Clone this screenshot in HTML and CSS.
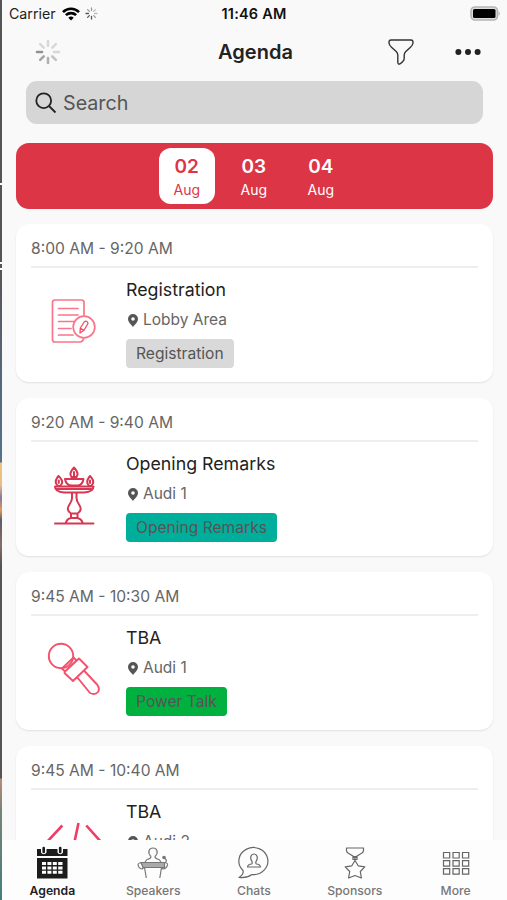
FILE: index.html
```html
<!DOCTYPE html>
<html lang="en">
<head>
    <meta charset="UTF-8">
    <meta name="viewport" content="width=device-width, initial-scale=1.0">
    <title>Agenda</title>
    <link rel="stylesheet" href="styles.css">
</head>
<body>
    <div class="backdrop"></div>
    <div class="app">
        <!-- Status bar -->
        <div class="status-bar">
            <div class="carrier">
                <span class="carrier-name">Carrier</span>
                <svg class="wifi" width="18" height="14" viewBox="0 0 18 14" fill="none" stroke="#000" stroke-width="2.6">
                    <path d="M1 5.1C5.500.6 12.500.6 17 5.100M3.900 8.200C6.700 5.400 11.300 5.400 14.100 8.200"/>
                    <path d="M9 13.500L6.300 10.700Q9 8.500 11.700 10.700Z" fill="#000" stroke="none"/>
                </svg>
                <svg class="status-spinner" width="13" height="13" viewBox="-13 -13 26 26" stroke-width="2.6" stroke-linecap="round">
                    <path stroke="#555" d="M-6 0H-11M-4.300 4.300L-7.800 7.800M0 6V11"/>
                    <path stroke="#999" d="M4.300 4.300L7.800 7.800M0-6V-11M-4.300-4.300L-7.800-7.800"/>
                    <path stroke="#bbb" d="M6 0H11M4.300-4.300L7.800-7.800"/>
                </svg>
            </div>
            <span class="clock">11:46 AM</span>
            <svg class="battery" width="31" height="15" viewBox="0 0 31 15">
                <rect x="1" y="1" width="26.500" height="13" rx="4" fill="#ddd" stroke="#b5b5b5" stroke-width="1.600"/>
                <rect x="3" y="3" width="22.500" height="9" rx="1.500" fill="#000"/>
                <path d="M28.700 5.200Q30.800 7.500 28.700 9.800Z" fill="#aaa"/>
            </svg>
        </div>

        <!-- Title bar -->
        <div class="nav-bar">
            <svg class="spinner" width="26" height="26" viewBox="-13 -13 26 26" stroke-width="2.600" stroke-linecap="round">
                <path stroke="#929292" d="M-6 0H-11"/>
                <path stroke="#a5a5a5" d="M-4.300 4.300L-7.800 7.800"/>
                <path stroke="#b0b0b0" d="M0 6V11"/>
                <path stroke="#c2c2c2" d="M4.300 4.300L7.800 7.800"/>
                <path stroke="#d8d8d8" d="M6 0H11M4.300-4.300L7.800-7.800M0-6V-11M-4.300-4.300L-7.800-7.800"/>
            </svg>
            <h1>Agenda</h1>
            <div class="actions">
                <svg width="26" height="26" viewBox="0 0 26 26" fill="none" stroke="#333" stroke-width="1.400" stroke-linejoin="round">
                    <path d="M3 1H23Q25.200 1 25 4Q24.800 6.200 22.500 8.200L17.800 12.600Q16.200 14.200 16.200 16V19.500Q16.200 21.200 14.700 22.600L12.300 24.700Q10 26 9.800 23.500V16Q9.800 14.200 8.200 12.600L3.500 8.200Q1.200 6.200 1 4Q.8 1 3 1Z"/>
                </svg>
                <svg width="26" height="8" viewBox="0 0 26 8" fill="#222">
                    <circle cx="3.400" cy="4" r="3"/><circle cx="13" cy="4" r="3"/><circle cx="22.600" cy="4" r="3"/>
                </svg>
            </div>
        </div>

        <div class="search">
            <svg width="22" height="22" viewBox="0 0 22 22" fill="none" stroke="#222" stroke-width="1.800">
                <circle cx="8.700" cy="8.700" r="7.400"/>
                <path d="M14 14L20.500 20.500"/>
            </svg>
            <span>Search</span>
        </div>

        <!-- Day picker -->
        <div class="days">
            <div class="day active"><strong>02</strong><span>Aug</span></div>
            <div class="day"><strong>03</strong><span>Aug</span></div>
            <div class="day"><strong>04</strong><span>Aug</span></div>
        </div>

        <!-- Sessions -->
        <div class="sessions">
            <div class="card">
                <div class="time">8:00 AM - 9:20 AM</div>
                <div class="session">
                    <svg class="picture" width="60" height="60" viewBox="0 0 60 60" fill="none" stroke="#f9758b" stroke-width="1.700" stroke-linecap="round">
                        <path d="M41 24V11.500Q41 9 38.500 9H12Q9.500 9 9.500 11.500V48.500Q9.500 51 12 51H37Q39.500 51 40.500 48"/>
                        <path d="M15.500 17.500H35M15.500 24H35M15.500 30.500H31M15.500 37.500H28M15.500 44H30"/>
                        <circle cx="41" cy="36" r="10.800"/>
                        <path stroke="#f44c68" stroke-width="1.300" stroke-linejoin="round" d="M37 42L37.300 37L41.500 30.500Q44.500 29.500 45 32.500L40.800 39.500ZM37.300 37L40.800 39.500"/>
                    </svg>
                    <div class="info">
                        <div class="title">Registration</div>
                        <div class="place"><svg width="10" height="13" viewBox="0 0 10 13"><path fill="#555" fill-rule="evenodd" d="M5 0A5 5 0 0 1 10 5C10 8.300 6.300 11 5 13C3.700 11 0 8.300 0 5A5 5 0 0 1 5 0ZM5 3.200A1.800 1.800 0 1 0 5 6.800A1.800 1.800 0 0 0 5 3.200Z"/></svg>Lobby Area</div>
                        <span class="tag">Registration</span>
                    </div>
                </div>
            </div>

            <div class="card">
                <div class="time">9:20 AM - 9:40 AM</div>
                <div class="session">
                    <svg class="picture" width="60" height="60" viewBox="0 0 60 60" fill="none" stroke="#d73752" stroke-width="2" stroke-linecap="round" stroke-linejoin="round">
                        <path d="M12 58.500H50.500M23 57.500Q24 53.800 28 53H34Q38.500 53.800 39.500 57.500"/>
                        <path d="M29 28V33Q29 36 26.500 39.500Q22.500 45 28 48.500V52.500M33.500 28V33Q33.500 36 36 39.500Q40 45 34.500 48.500V52.500M28 48.500H34.500"/>
                        <path d="M12 21.500H50.500Q50.500 26.800 41 27.500H21Q12 26.800 12 21.500ZM14 24H48"/>
                        <path d="M22 14H40.500Q39.500 20 35 20.500H28Q23 20 22 14Z"/>
                        <path d="M31 2.500Q36.500 8.500 33.500 12H28.500Q25.500 8.500 31 2.500ZM31 7V11M15.500 11Q12 15 13 18.500L15 21H17L19 18.500Q20 15 15.500 11ZM47 11Q43.500 15 44.500 18.500L46 21H48L50 18.500Q51 15 47 11ZM15.800 15.500V18M47 15.500V18"/>
                    </svg>
                    <div class="info">
                        <div class="title">Opening Remarks</div>
                        <div class="place"><svg width="10" height="13" viewBox="0 0 10 13"><path fill="#555" fill-rule="evenodd" d="M5 0A5 5 0 0 1 10 5C10 8.300 6.300 11 5 13C3.700 11 0 8.300 0 5A5 5 0 0 1 5 0ZM5 3.200A1.800 1.800 0 1 0 5 6.800A1.800 1.800 0 0 0 5 3.200Z"/></svg>Audi 1</div>
                        <span class="tag teal">Opening Remarks</span>
                    </div>
                </div>
            </div>

            <div class="card">
                <div class="time">9:45 AM - 10:30 AM</div>
                <div class="session">
                    <svg class="picture" width="60" height="60" viewBox="0 0 60 60" fill="none" stroke="#f4516d" stroke-width="1.900" stroke-linejoin="round">
                        <circle cx="18" cy="17" r="12.200"/>
                        <path d="M19 29.500L30.500 18.500L33.500 21.500L22 32.500ZM22 32.500L36 19.500L44.500 28L30 42L21.500 34ZM34 38L47 54Q52 56.500 55 53Q57 50 54.500 46L41 31.500"/>
                    </svg>
                    <div class="info">
                        <div class="title">TBA</div>
                        <div class="place"><svg width="10" height="13" viewBox="0 0 10 13"><path fill="#555" fill-rule="evenodd" d="M5 0A5 5 0 0 1 10 5C10 8.300 6.300 11 5 13C3.700 11 0 8.300 0 5A5 5 0 0 1 5 0ZM5 3.200A1.800 1.800 0 1 0 5 6.800A1.800 1.800 0 0 0 5 3.200Z"/></svg>Audi 1</div>
                        <span class="tag green">Power Talk</span>
                    </div>
                </div>
            </div>

            <div class="card">
                <div class="time">9:45 AM - 10:40 AM</div>
                <div class="session">
                    <svg class="picture" width="60" height="60" viewBox="0 0 60 60" fill="none" stroke="#ee3e65" stroke-width="2.600">
                        <path d="M19.300 12.500L3 30L19.300 47.500M35.500 10L27 50M43.300 12.500L59 30L43.300 47.500"/>
                    </svg>
                    <div class="info">
                        <div class="title">TBA</div>
                        <div class="place"><svg width="10" height="13" viewBox="0 0 10 13"><path fill="#555" fill-rule="evenodd" d="M5 0A5 5 0 0 1 10 5C10 8.300 6.300 11 5 13C3.700 11 0 8.300 0 5A5 5 0 0 1 5 0ZM5 3.200A1.800 1.800 0 1 0 5 6.800A1.800 1.800 0 0 0 5 3.200Z"/></svg>Audi 2</div>
                    </div>
                </div>
            </div>
        </div>

        <!-- Bottom tabs -->
        <div class="tabs">
            <div class="tab active">
                <svg width="34" height="34" viewBox="0 0 34 34">
                    <path fill="#1c1c1c" d="M2 3H6V6.500A3 3 0 0 0 11.500 6.500V3H22.500V6.500A3 3 0 0 0 28 6.500V3H32.500V10H2ZM2 12H32.500V32.500H2Z"/>
                    <path stroke="#1c1c1c" stroke-width="2.600" stroke-linecap="round" d="M8.700 2V6M25.200 2V6"/>
                    <path fill="#fff" d="M7 16H11V19H7ZM12.400 16H16.400V19H12.400ZM17.800 16H21.800V19H17.800ZM23.200 16H27.500V19H23.200ZM7 20.400H11V23.400H7ZM12.400 20.400H16.400V23.400H12.400ZM17.800 20.400H21.800V23.400H17.800ZM23.200 20.400H27.500V23.400H23.200ZM7 24.800H11V27.800H7ZM12.400 24.800H16.400V27.800H12.400ZM17.800 24.800H21.800V27.800H17.800ZM23.200 24.800H27.500V27.800H23.200Z"/>
                </svg>
                <span>Agenda</span>
            </div>
            <div class="tab">
                <svg width="34" height="34" viewBox="0 0 34 34" fill="none" stroke="#777" stroke-width="1.200" stroke-linejoin="round">
                    <path d="M15 10.500C11 6.500 13 2 17 2S23 6.500 19 10.500Q19 12.500 23 13.500L25 16M15 10.500Q15 12.500 11 13.500L9 16"/>
                    <path fill="#aaa" d="M5 16.500H28.500V21.500H7Z"/>
                    <path d="M5 16.500Q2 17.500 2 18.500Q2.500 22.500 6 23L8 21.500M28.500 16.500Q32 17 31.500 19Q30.500 22.500 27 23L25.500 21.500M8.500 21.500L10.300 32M25.500 21.500L23.800 32M29 16.500Q32 15 28.500 12"/>
                    <circle cx="28" cy="11.500" r="1.200" fill="#777"/>
                </svg>
                <span>Speakers</span>
            </div>
            <div class="tab">
                <svg width="34" height="34" viewBox="0 0 34 34" fill="none" stroke="#666" stroke-width="1.200" stroke-linejoin="round">
                    <path d="M6 24.500A14.500 13.500 0 1 1 15 28.500Q9.500 32.500 2 31.500Q7 28.500 6 24.500Z"/>
                    <path d="M15 15.500C12.500 11.500 14 8 17 8S21.500 11.500 19 15.500Q18.500 17.500 19.500 18Q23 18 23.500 21H10.500Q11 18 14.500 18Q15.500 17.500 15 15.500Z"/>
                </svg>
                <span>Chats</span>
            </div>
            <div class="tab">
                <svg width="34" height="34" viewBox="0 0 34 34" fill="none" stroke="#666" stroke-width="1.200" stroke-linejoin="round">
                    <path d="M8.500 2H25.500V4.500Q25.500 6 24 7L18.300 10.500H15.700L10 7Q8.500 6 8.500 4.500ZM15 10.500H19V13.500H15ZM15 10.500L19 13.500M19 10.500L15 13.500"/>
                    <path d="M17 14.500L20.200 19.800L26.800 20.800L22.300 25.500L23.400 32L17 29.500L10.600 32L11.700 25.500L7.200 20.800L13.800 19.800Z"/>
                </svg>
                <span>Sponsors</span>
            </div>
            <div class="tab">
                <svg width="34" height="34" viewBox="0 0 34 34" fill="none" stroke="#666" stroke-width="1.200">
                    <path d="M4.500 6.500H10.700V12H4.500ZM14 6.500H20.200V12H14ZM23.500 6.500H29.700V12H23.500ZM4.500 14.600H10.700V20.100H4.500ZM14 14.600H20.200V20.100H14ZM23.500 14.600H29.700V20.100H23.500ZM4.500 22.700H10.700V28.200H4.500ZM14 22.700H20.200V28.200H14ZM23.500 22.700H29.700V28.200H23.500Z"/>
                </svg>
                <span>More</span>
            </div>
        </div>
    </div>
</body>
</html>
```

FILE: styles.css
```css
* {
    box-sizing: border-box;
}
body {
    font-family: Inter, "Liberation Sans", sans-serif;
    display: flex;
    height: 900px;
    margin: 0;
    overflow: hidden;
}
svg {
    display: block;
    flex-shrink: 0;
}
/* desktop showing through behind the window */
.backdrop {
    width: 2px;
    background: linear-gradient(#555 183px, #fff 183px, #fff 185px, #555 185px, #555 262px, #fff 262px, #fff 264px, #555 264px, #555 268px, #fff 268px, #fff 270px, #555 270px, #59606d 330px, #53738e 462px, #edc27c 463px, #e9bd8b 485px, #85769a 498px, #e59a59 510px, #5d5b68 520px, #866f65 545px, #555 565px, #555 778px, #b88d76 779px, #778477 810px, #467d7c 900px);
}
.app {
    width: 505px;
    height: 900px;
    display: flex;
    flex-direction: column;
    background-color: #f9f9f9;
}
.status-bar {
    height: 27px;
    display: grid;
    grid-template-columns: 1fr auto 1fr;
    align-items: center;
    padding: 0 6px 0 7px;
}
.carrier {
    display: flex;
    align-items: center;
}
.carrier-name {
    font-size: 14.2px;
    color: #222;
}
.wifi {
    margin-left: 6px;
}
.status-spinner {
    margin-left: 5px;
}
.clock {
    margin-right: 2px;
    font-size: 14.5px;
    font-weight: 600;
    letter-spacing: 0.2px;
    color: #111;
}
.battery {
    justify-self: end;
}
.nav-bar {
    height: 54px;
    display: grid;
    grid-template-columns: 1fr auto 1fr;
    align-items: center;
    padding: 0 26px 4px 33px;
}
h1 {
    margin: 0 5px 0 0;
    font-size: 20px;
    font-weight: 600;
    color: #222;
}
.actions {
    display: flex;
    align-items: center;
    justify-content: flex-end;
    gap: 41px;
}
.search {
    height: 43px;
    margin: 0 24px;
    padding-left: 9px;
    display: flex;
    align-items: center;
    gap: 6px;
    border-radius: 11px;
    background-color: #d6d6d6;
    font-size: 19.7px;
    color: #555;
}
.days {
    height: 66px;
    flex-shrink: 0;
    margin: 18.5px 14.5px 0 14px;
    padding-right: 1px;
    display: flex;
    justify-content: center;
    align-items: center;
    gap: 11px;
    border-radius: 13px;
    background-color: #dc3545;
    color: #fff;
}
.day {
    width: 56px;
    height: 56px;
    display: flex;
    flex-direction: column;
    align-items: center;
    padding-top: 7px;
    border-radius: 12px;
}
.day.active {
    background-color: #fff;
    color: #dc3545;
}
.day strong {
    font-size: 19px;
    font-weight: 600;
    line-height: 24px;
}
.day span {
    font-size: 14px;
    line-height: 21px;
}
.sessions {
    flex: 1;
    min-height: 0;
    overflow: hidden;
    padding: 15.5px 14px 0;
    display: flex;
    flex-direction: column;
    gap: 16px;
}
.card {
    height: 158px;
    flex-shrink: 0;
    padding: 0 15px;
    border-radius: 13px;
    background-color: #fff;
    box-shadow: 0 1px 2px rgba(0, 0, 0, 0.1);
}
.time {
    height: 44px;
    line-height: 50px;
    border-bottom: 2px solid #eee;
    font-size: 15.6px;
    color: #666;
}
.session {
    display: flex;
    padding-left: 12px;
}
.picture {
    margin-top: 23px;
}
.info {
    margin-left: 23px;
    padding-top: 10px;
}
.title {
    font-size: 17.8px;
    line-height: 24px;
    color: #222;
}
.place {
    display: flex;
    align-items: center;
    gap: 5px;
    margin: 7px 0 0 2px;
    font-size: 15.5px;
    line-height: 22px;
    color: #666;
}
.tag {
    display: inline-block;
    margin-top: 8px;
    padding: 1px 10px 0;
    border-radius: 4px;
    background-color: #d9d9d9;
    font-size: 15.6px;
    line-height: 28px;
    color: #555;
}
.tag.teal {
    background-color: #00af9b;
}
.tag.green {
    background-color: #00b140;
}
.tabs {
    height: 60px;
    flex-shrink: 0;
    display: grid;
    grid-template-columns: repeat(5, 1fr);
    padding-right: 1px;
    background-color: #fdfdfd;
}
.tab {
    display: flex;
    flex-direction: column;
    align-items: center;
    padding-top: 6px;
    font-size: 12.2px;
    font-weight: 500;
    color: #777;
}
.tab span {
    margin-top: 3px;
    line-height: 16px;
}
.tab.active {
    color: #222;
    font-weight: 600;
}
```
